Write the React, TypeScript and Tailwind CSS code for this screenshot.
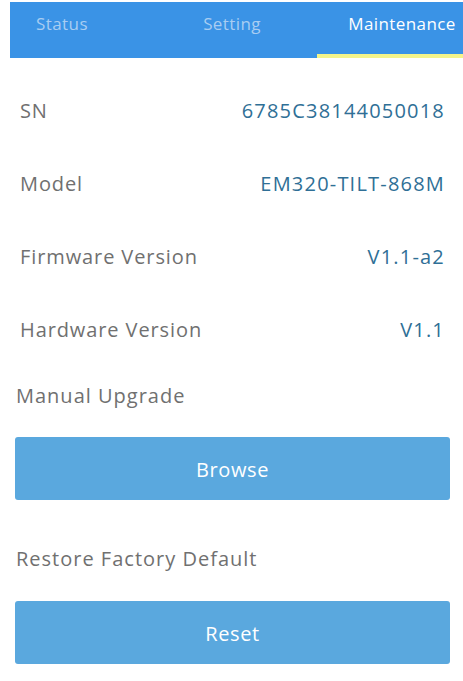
import React from "react";

const rows = [
  { label: "SN", value: "6785C38144050018" },
  { label: "Model", value: "EM320-TILT-868M" },
  { label: "Firmware Version", value: "V1.1-a2" },
  { label: "Hardware Version", value: "V1.1" },
];

export default function App() {
  return (
    <div
      className="w-[463px] h-[681px] bg-white overflow-hidden"
      style={{ fontFamily: "'Open Sans', 'Noto Sans', sans-serif" }}
    >
      <div className="pt-[2px] pl-[10px]">
        <div className="h-[56px] bg-[#3a93e6] overflow-hidden">
          <div className="flex ml-[-33px] h-full">
            <div className="w-[170px] shrink-0 flex items-center justify-center pb-[12px] text-[17px] tracking-[0.4px] text-[#a8cdf2]">
              Status
            </div>
            <div className="w-[170px] shrink-0 flex items-center justify-center pb-[12px] text-[17px] tracking-[0.4px] text-[#a8cdf2]">
              Setting
            </div>
            <div className="w-[170px] shrink-0 flex flex-col">
              <div className="flex-1 flex items-center justify-center pb-[8px] text-[17px] tracking-[0.4px] text-white">
                Maintenance
              </div>
              <div className="h-[4px] bg-[#f4f48a]" />
            </div>
          </div>
        </div>
      </div>

      <div className="flex flex-col pt-[16px]">
        {rows.map((r) => (
          <div key={r.label} className="h-[73px] flex items-center justify-between pl-[20px] pr-[18px]">
            <span className="text-[20px] text-[#707070] tracking-[0.9px]">{r.label}</span>
            <span className="text-[20px] text-[#2f6f96] tracking-[1.2px]">{r.value}</span>
          </div>
        ))}
      </div>

      <div className="px-[15px] pr-[13px]">
        <div className="text-[20px] text-[#707070] tracking-[1px] pl-[1px] h-[30px] flex items-center mt-[15px]">Manual Upgrade</div>
        <button className="mt-[26px] w-full h-[63px] rounded-[3px] bg-[#5aa8de] text-white text-[20px] tracking-[0.6px] flex items-center justify-center pt-[2px]">
          Browse
        </button>
        <div className="text-[20px] text-[#707070] tracking-[1px] pl-[1px] h-[30px] flex items-center mt-[44px]">Restore Factory Default</div>
        <button className="mt-[27px] w-full h-[63px] rounded-[3px] bg-[#5aa8de] text-white text-[20px] tracking-[0.6px] flex items-center justify-center pt-[2px]">
          Reset
        </button>
      </div>
    </div>
  );
}
